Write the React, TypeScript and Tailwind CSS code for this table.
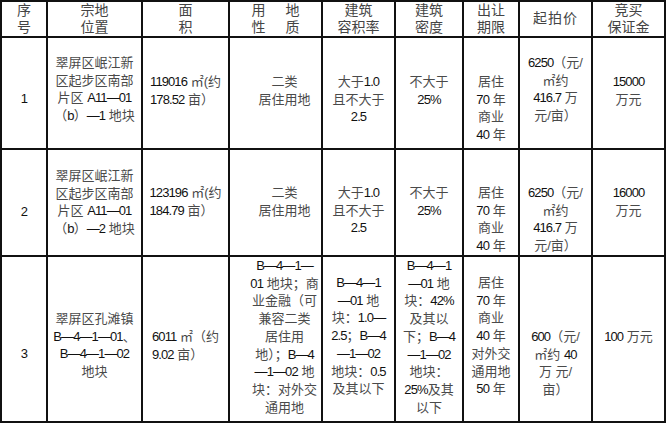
import React from "react";

type C = { lines: string[]; pt: string; left?: boolean; extra?: string };

function Txt({ s }: { s: string }) {
  const parts = s.split(/([A-Za-z0-9.%—]+)/);
  return (
    <>
      {parts.map((p, i) =>
        i % 2 === 1 ? (
          <span key={i} className="tracking-[-0.9px] text-[#111]">
            {p}
          </span>
        ) : (
          <span key={i}>{p}</span>
        )
      )}
    </>
  );
}

function BodyCell({ c }: { c: C }) {
  return (
    <div
      className={
        "bg-white flex flex-col items-center text-[13px] leading-[17.7px] text-[#4a4a4a] " +
        c.pt +
        " " +
        (c.extra ?? "")
      }
    >
      <div className={c.left ? "text-left" : "text-center"}>
        {c.lines.map((l, i) => (
          <div key={i} className="whitespace-pre">
            <Txt s={l} />
          </div>
        ))}
      </div>
    </div>
  );
}

function Head({ children }: { children: React.ReactNode }) {
  return (
    <div className="bg-white flex flex-col items-center justify-center text-center text-[14px] leading-[17.5px] text-[#444]">
      {children}
    </div>
  );
}

const rows: C[][] = [
  [
    { lines: ["1"], pt: "pt-[52px]" },
    { lines: ["翠屏区岷江新", "区起步区南部", "片区 A11—01", "（b）—1 地块"], pt: "pt-[16px]" },
    { lines: ["119016 ㎡(约", "178.52 亩）"], pt: "pt-[35px]", left: true },
    { lines: ["二类", "居住用地"], pt: "pt-[35px]", extra: "pl-[18px]" },
    { lines: ["大于1.0", "且不大于", "2.5"], pt: "pt-[35px]" },
    { lines: ["不大于", "25%"], pt: "pt-[35px]" },
    { lines: ["居住", "70 年", "商业", "40 年"], pt: "pt-[35px]" },
    { lines: ["6250（元/", "㎡约", "416.7 万", "元/亩）"], pt: "pt-[16px]" },
    { lines: ["15000", "万元"], pt: "pt-[35px]" },
  ],
  [
    { lines: ["2"], pt: "pt-[53px]" },
    { lines: ["翠屏区岷江新", "区起步区南部", "片区 A11—01", "（b）—2 地块"], pt: "pt-[17px]" },
    { lines: ["123196 ㎡(约", "184.79 亩）"], pt: "pt-[34px]", left: true },
    { lines: ["二类", "居住用地"], pt: "pt-[34px]", extra: "pl-[18px]" },
    { lines: ["大于1.0", "且不大于", "2.5"], pt: "pt-[34px]" },
    { lines: ["不大于", "25%"], pt: "pt-[34px]" },
    { lines: ["居住", "70 年", "商业", "40 年"], pt: "pt-[34px]" },
    { lines: ["6250（元/", "㎡约", "416.7 万", "元/亩）"], pt: "pt-[34px]" },
    { lines: ["16000", "万元"], pt: "pt-[34px]" },
  ],
  [
    { lines: ["3"], pt: "pt-[88px]" },
    { lines: ["翠屏区孔滩镇", "B—4—1—01、", "B—4—1—02", "地块"], pt: "pt-[53px]" },
    { lines: ["6011 ㎡（约", "9.02 亩）"], pt: "pt-[71px]", left: true },
    {
      lines: ["B—4—1—", "01 地块；商", "业金融（可", "兼容二类", "居住用", "地）；B—4", "—1—02 地", "块：对外交", "通用地"],
      pt: "pt-[0px]",
      extra: "pl-[18px]",
    },
    {
      lines: ["B—4—1", "—01 地", "块：1.0—", "2.5；B—4", "—1—02", "地块：0.5", "及其以下"],
      pt: "pt-[17px]",
    },
    {
      lines: ["B—4—1", "—01 地", "块：42%", "及其以", "下；B—4", "—1—02", "地块：", "25%及其", "以下"],
      pt: "pt-[0px]",
    },
    { lines: ["居住", "70 年", "商业", "40 年", "对外交", "通用地", "50 年"], pt: "pt-[17px]" },
    { lines: ["600（元/", "㎡约 40", "万 元/", "亩）"], pt: "pt-[71px]" },
    { lines: ["100 万元"], pt: "pt-[71px]" },
  ],
];

export default function App() {
  return (
    <div className="w-[667px] h-[424px] bg-white font-['Liberation_Sans','Noto_Sans_CJK_SC',sans-serif]">
      <div className="w-[666px] grid grid-cols-[44px_93px_85px_91px_71px_66px_54px_71px_71px] grid-rows-[34px_110px_105px_164px] gap-[2px] p-[2px] bg-[#111]">
        <Head>
          <div>序</div>
          <div>号</div>
        </Head>
        <Head>
          <div>宗地</div>
          <div>位置</div>
        </Head>
        <Head>
          <div>面</div>
          <div>积</div>
        </Head>
        <Head>
          <div className="flex gap-[20px]">
            <span>用</span>
            <span>地</span>
          </div>
          <div className="flex gap-[20px]">
            <span>性</span>
            <span>质</span>
          </div>
        </Head>
        <Head>
          <div>建筑</div>
          <div>容积率</div>
        </Head>
        <Head>
          <div>建筑</div>
          <div>密度</div>
        </Head>
        <Head>
          <div>出让</div>
          <div>期限</div>
        </Head>
        <Head>
          <div className="tracking-[1px]">起拍价</div>
        </Head>
        <Head>
          <div>竞买</div>
          <div>保证金</div>
        </Head>
        {rows.map((r, ri) => r.map((c, ci) => <BodyCell key={ri + "-" + ci} c={c} />))}
      </div>
    </div>
  );
}
